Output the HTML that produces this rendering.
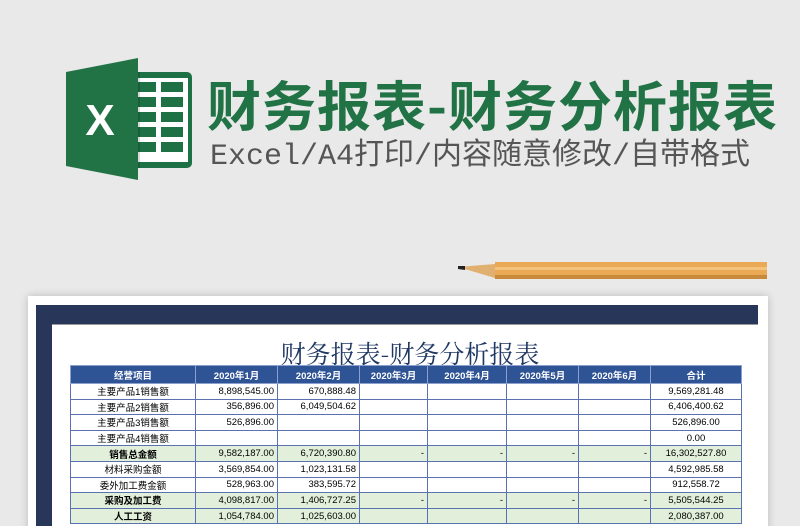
<!DOCTYPE html>
<html><head><meta charset="utf-8"><style>
*{margin:0;padding:0;box-sizing:border-box}
html,body{width:800px;height:526px;overflow:hidden}
body{background:#e9e9e9;position:relative;font-family:"Liberation Sans","Noto Sans CJK SC",sans-serif}
.t1{position:absolute;left:207px;top:63px;font-size:54px;font-weight:bold;color:#217346;letter-spacing:1px;white-space:nowrap;font-family:"Noto Sans CJK SC",sans-serif}
.t2{position:absolute;left:210px;top:129px;font-size:30px;color:#555;white-space:nowrap;font-family:"Liberation Mono","Noto Sans CJK SC",monospace}
.paper{position:absolute;left:28px;top:296px;width:740px;height:240px;background:#fff;box-shadow:0 0 8px rgba(0,0,0,.2)}
.frame{position:absolute;left:36px;top:305px;width:722px;height:230px;background:#28365a}
.inner{position:absolute;left:52px;top:324px;width:706px;height:210px;background:#fff;border-top:1px solid #999}
.title{position:absolute;left:0;width:820px;top:335px;text-align:center;font-size:25px;color:#1f3864;font-family:"Noto Serif CJK SC",serif}
table{position:absolute;left:70px;top:365px;border-collapse:collapse;font-size:9.5px;table-layout:fixed}
td{border:1.5px solid #5a73b0;height:15.6px;padding:0 3px;white-space:nowrap}
tr.h td{background:#2f5496;color:#fff;font-weight:bold;text-align:center;height:18px;border-color:#8ca0d0}
td.c{text-align:center}td.r{text-align:right}
tr.g td{background:#e2efda}
tr.g td.c{font-weight:bold}
</style></head><body>
<svg style="position:absolute;left:66px;top:58px" width="130" height="122" viewBox="0 0 130 122">
<rect x="60" y="14" width="66" height="96" rx="5" fill="#1e7145"/>
<rect x="66" y="20" width="56" height="84" fill="#fff"/>
<g fill="#1e7145">
<rect x="72" y="24" width="18" height="10"/><rect x="95" y="24" width="22" height="10"/>
<rect x="72" y="39" width="18" height="10"/><rect x="95" y="39" width="22" height="10"/>
<rect x="72" y="54" width="18" height="10"/><rect x="95" y="54" width="22" height="10"/>
<rect x="72" y="69" width="18" height="10"/><rect x="95" y="69" width="22" height="10"/>
<rect x="72" y="84" width="18" height="10"/><rect x="95" y="84" width="22" height="10"/>
</g>
<rect x="60" y="14" width="14" height="96" fill="#000" opacity=".15"/>
<path d="M0 14 L72 0 L72 122 L0 108 Z" fill="#217346"/>
<text x="34" y="77" font-size="44" font-weight="bold" fill="#fff" text-anchor="middle" font-family="Liberation Sans">X</text>
</svg>
<div class="t1">财务报表-财务分析报表</div>
<div class="t2">Excel/A4打印/内容随意修改/自带格式</div>
<svg style="position:absolute;left:455px;top:260px" width="315" height="22">
<path d="M3 7 L40 4 L40 18 Z" fill="#e0b070"/>
<path d="M3 6 L10 6 L10 10 L3 9 Z" fill="#222"/>
<rect x="40" y="2" width="272" height="17" fill="#e9a955"/>
<rect x="40" y="7" width="272" height="3" fill="#f4c27a"/>
<rect x="40" y="15" width="272" height="4" fill="#c8893a"/>
</svg>
<div class="paper"></div>
<div class="frame"></div>
<div class="inner"></div>
<div class="title">财务报表-财务分析报表</div>
<table>
<colgroup><col style="width:125px"><col style="width:82px"><col style="width:82px"><col style="width:68px"><col style="width:79px"><col style="width:72px"><col style="width:72px"><col style="width:91px"></colgroup>
<tr class="h"><td>经营项目</td><td>2020年1月</td><td>2020年2月</td><td>2020年3月</td><td>2020年4月</td><td>2020年5月</td><td>2020年6月</td><td>合计</td></tr>
<tr><td class="c">主要产品1销售额</td><td class="r">8,898,545.00</td><td class="r">670,888.48</td><td></td><td></td><td></td><td></td><td class="c">9,569,281.48</td></tr>
<tr><td class="c">主要产品2销售额</td><td class="r">356,896.00</td><td class="r">6,049,504.62</td><td></td><td></td><td></td><td></td><td class="c">6,406,400.62</td></tr>
<tr><td class="c">主要产品3销售额</td><td class="r">526,896.00</td><td></td><td></td><td></td><td></td><td></td><td class="c">526,896.00</td></tr>
<tr><td class="c">主要产品4销售额</td><td></td><td></td><td></td><td></td><td></td><td></td><td class="c">0.00</td></tr>
<tr class="g"><td class="c">销售总金额</td><td class="r">9,582,187.00</td><td class="r">6,720,390.80</td><td class="r">-</td><td class="r">-</td><td class="r">-</td><td class="r">-</td><td class="c" style="font-weight:normal">16,302,527.80</td></tr>
<tr><td class="c">材料采购金额</td><td class="r">3,569,854.00</td><td class="r">1,023,131.58</td><td></td><td></td><td></td><td></td><td class="c">4,592,985.58</td></tr>
<tr><td class="c">委外加工费金额</td><td class="r">528,963.00</td><td class="r">383,595.72</td><td></td><td></td><td></td><td></td><td class="c">912,558.72</td></tr>
<tr class="g"><td class="c">采购及加工费</td><td class="r">4,098,817.00</td><td class="r">1,406,727.25</td><td class="r">-</td><td class="r">-</td><td class="r">-</td><td class="r">-</td><td class="c" style="font-weight:normal">5,505,544.25</td></tr>
<tr class="g"><td class="c">人工工资</td><td class="r">1,054,784.00</td><td class="r">1,025,603.00</td><td></td><td></td><td></td><td></td><td class="c" style="font-weight:normal">2,080,387.00</td></tr>
</table>
</body></html>
